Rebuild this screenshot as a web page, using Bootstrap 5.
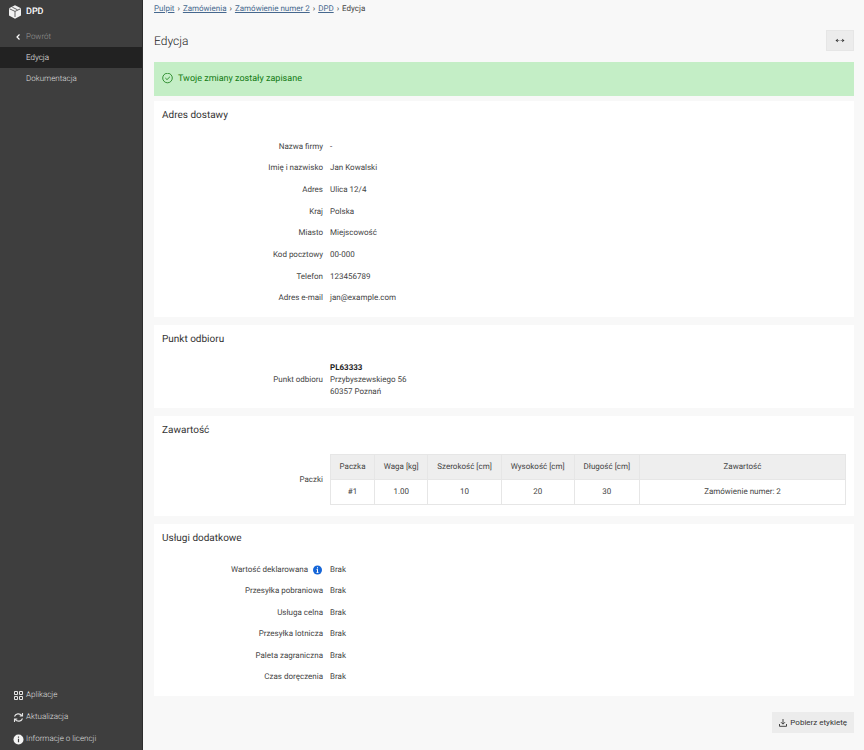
<!DOCTYPE html>
<html lang="pl">
<head>
<meta charset="utf-8">
<meta name="viewport" content="width=device-width, initial-scale=1">
<title>DPD – Edycja</title>
<link href="https://cdn.jsdelivr.net/npm/bootstrap@5.3.0/dist/css/bootstrap.min.css" rel="stylesheet">
<style>
body { font-family: Roboto, "Liberation Sans", sans-serif; font-size: 8px; line-height: 12px; color: #444; background: #f8f8f8; text-rendering: geometricPrecision; }
.side { flex: 0 0 143px; background: #3e3e3e; border-right: 1px solid #2c2c2c; }
.side a { color: #dedede; height: 21px; font-weight: 300; }
.side .brand { height: 23px; padding-left: 8px; gap: 4px; font-size: 9px; font-weight: 500; color: #fff; margin-bottom: 3px; }
.side .nav-item-link { padding-left: 26px; }
.side .back { padding-left: 15px; gap: 5px; color: #959595; }
.side .current { background: #222; color: #eee; }
.side .tool { height: 22px; padding-left: 13px; gap: 2px; }
.main-area { padding: 3px 10px 16px 11px; }
.crumbs { font-size: 8px; --bs-breadcrumb-divider: "›"; --bs-breadcrumb-item-padding-x: 3px; --bs-breadcrumb-divider-color: #444; }
.crumbs a { color: #46688e; }
.crumbs .active { color: #444; }
.title-row { margin: 15px 0 11px; }
.title-row h1 { font-size: 12px; line-height: 16px; font-weight: 300; color: #222; }
.grey-btn { --bs-btn-bg: #ececec; --bs-btn-hover-bg: #e2e2e2; --bs-btn-border-color: #e6e6e6; --bs-btn-color: #333; --bs-btn-hover-color: #333; --bs-btn-font-size: 8px; --bs-btn-border-radius: 0; --bs-btn-padding-x: 5px; --bs-btn-padding-y: 0; line-height: 19px; }
.label-btn { --bs-btn-padding-x: 6px; --bs-btn-border-color: #ececec; gap: 3px; }
.expand-btn { width: 28px; height: 21px; }
.saved { padding: 11px 8px; gap: 4px; background: #c4eec6; color: #127a12; font-size: 9px; font-weight: 400; margin-bottom: 5px; }
.panel { background: #fff; padding: 8px; margin-bottom: 8px; }
.panel h2 { font-size: 10px; line-height: 14px; font-weight: 400; color: #333; margin-bottom: 13px; }
.panel-address { min-height: 216px; }
.panel-point { min-height: 83px; }
.panel-content { min-height: 100px; }
.panel-extra { min-height: 172px; }
.field { gap: 7px; }
.field-name { flex: 0 0 161px; text-align: right; }
.field strong { color: #222; }
.parcels { --bs-table-border-color: #e6e6e6; --bs-table-color: #444; font-size: 8px; }
.parcels th, .parcels td { padding: 6px 8px; text-align: center; white-space: nowrap; line-height: 12px; font-weight: 400; }
.parcels th { background: #eee; }
.parcels .fill { width: 40%; }
</style>
<script src="https://cdn.jsdelivr.net/npm/bootstrap@5.3.0/dist/js/bootstrap.bundle.min.js"></script>
</head>
<body>
<div class="d-flex min-vh-100">
  <nav class="side d-flex flex-column" aria-label="Menu">
    <a href="#" class="brand d-flex align-items-center text-decoration-none">
      <svg width="14" height="14" viewBox="0 0 14 14" aria-hidden="true"><path d="M7 0.300 13 3.300v7.200L7 13.700 1 10.500V3.300z" fill="#f2f2f2"/><path d="M1.500 3.800 7 6.400l5.500-2.600M7 6.400v5.600M4.300 2.200 9.500 4.800" fill="none" stroke="#3e3e3e" stroke-width=".8"/></svg>
      DPD
    </a>
    <a href="#" class="back d-flex align-items-center text-decoration-none">
      <svg width="6" height="8" viewBox="0 0 6 8" aria-hidden="true"><path d="M4.500 1.500 2 4l2.500 2.500" fill="none" stroke="#fff" stroke-width="1.200"/></svg>
      Powrót
    </a>
    <a href="#" class="nav-item-link current d-flex align-items-center text-decoration-none" aria-current="page">Edycja</a>
    <a href="#" class="nav-item-link d-flex align-items-center text-decoration-none">Dokumentacja</a>
    <div class="mt-auto">
      <a href="#" class="tool d-flex align-items-center text-decoration-none">
        <svg width="11" height="11" viewBox="0 0 11 11" aria-hidden="true" fill="none" stroke="#e4e4e4"><path d="M1.500 1.500h3v3h-3zM6.500 1.500h3v3h-3zM1.500 6.500h3v3h-3zM6.500 6.500h3v3h-3z"/></svg>
        Aplikacje
      </a>
      <a href="#" class="tool d-flex align-items-center text-decoration-none">
        <svg width="11" height="11" viewBox="0 0 11 11" aria-hidden="true" fill="none" stroke="#e4e4e4" stroke-width="1.100"><path d="M1.500 4.500C2.500 1.500 6.500.8 9 3.600M9.500 1v3H6.700M9.500 6.500C8.500 9.500 4.500 10.200 2 7.400M1.500 10V7h2.800"/></svg>
        Aktualizacja
      </a>
      <a href="#" class="tool d-flex align-items-center text-decoration-none">
        <svg width="11" height="11" viewBox="0 0 11 11" aria-hidden="true"><circle cx="5.500" cy="5.500" r="5" fill="#f4f4f4"/><path d="M5.500 2.500v1.300M5.500 4.700v3.600" stroke="#3e3e3e" stroke-width="1.200"/></svg>
        Informacje o licencji
      </a>
    </div>
  </nav>

  <main class="main-area flex-grow-1">
    <nav aria-label="Ścieżka">
      <ol class="breadcrumb crumbs mb-0">
        <li class="breadcrumb-item"><a href="#">Pulpit</a></li>
        <li class="breadcrumb-item"><a href="#">Zamówienia</a></li>
        <li class="breadcrumb-item"><a href="#">Zamówienie numer 2</a></li>
        <li class="breadcrumb-item"><a href="#">DPD</a></li>
        <li class="breadcrumb-item active" aria-current="page">Edycja</li>
      </ol>
    </nav>

    <div class="title-row d-flex align-items-center justify-content-between">
      <h1 class="m-0">Edycja</h1>
      <button type="button" class="btn grey-btn expand-btn d-flex align-items-center justify-content-center" aria-label="Rozszerz">
        <svg width="10" height="5" viewBox="0 0 10 5" aria-hidden="true"><path d="M.5 2.500 2.800.8v3.400zM9.500 2.500 7.200.8v3.400z" fill="#333"/><path d="M2.500 2.500h1.900M5.600 2.500h1.900" stroke="#888"/></svg>
      </button>
    </div>

    <div class="saved d-flex align-items-center" role="status">
      <svg width="12" height="12" viewBox="0 0 12 12" aria-hidden="true" fill="none" stroke="#127a12" stroke-width=".8"><circle cx="5.500" cy="5" r="4.800"/><path d="M3.300 5 5 6.600 7.900 3.800"/></svg>
      Twoje zmiany zostały zapisane
    </div>

    <section class="panel panel-address d-flex flex-column">
      <h2>Adres dostawy</h2>
      <dl class="d-flex flex-column flex-fill m-0">
        <div class="field d-flex flex-fill align-items-center"><dt class="field-name fw-normal">Nazwa firmy</dt><dd class="m-0">-</dd></div>
        <div class="field d-flex flex-fill align-items-center"><dt class="field-name fw-normal">Imię i nazwisko</dt><dd class="m-0">Jan Kowalski</dd></div>
        <div class="field d-flex flex-fill align-items-center"><dt class="field-name fw-normal">Adres</dt><dd class="m-0">Ulica 12/4</dd></div>
        <div class="field d-flex flex-fill align-items-center"><dt class="field-name fw-normal">Kraj</dt><dd class="m-0">Polska</dd></div>
        <div class="field d-flex flex-fill align-items-center"><dt class="field-name fw-normal">Miasto</dt><dd class="m-0">Miejscowość</dd></div>
        <div class="field d-flex flex-fill align-items-center"><dt class="field-name fw-normal">Kod pocztowy</dt><dd class="m-0">00-000</dd></div>
        <div class="field d-flex flex-fill align-items-center"><dt class="field-name fw-normal">Telefon</dt><dd class="m-0">123456789</dd></div>
        <div class="field d-flex flex-fill align-items-center"><dt class="field-name fw-normal">Adres e-mail</dt><dd class="m-0">jan@example.com</dd></div>
      </dl>
    </section>

    <section class="panel panel-point d-flex flex-column">
      <h2>Punkt odbioru</h2>
      <dl class="d-flex flex-column flex-fill m-0">
        <div class="field d-flex flex-fill align-items-center"><dt class="field-name fw-normal">Punkt odbioru</dt><dd class="m-0"><strong>PL63333</strong><br>Przybyszewskiego 56<br>60357 Poznań</dd></div>
      </dl>
    </section>

    <section class="panel panel-content d-flex flex-column">
      <h2>Zawartość</h2>
      <div class="field d-flex flex-fill align-items-center">
        <span class="field-name" id="parcels-name">Paczki</span>
        <table class="table table-bordered parcels mb-0" aria-labelledby="parcels-name">
          <thead><tr><th scope="col">Paczka</th><th scope="col">Waga [kg]</th><th scope="col">Szerokość [cm]</th><th scope="col">Wysokość [cm]</th><th scope="col">Długość [cm]</th><th scope="col" class="fill">Zawartość</th></tr></thead>
          <tbody><tr><td>#1</td><td>1.00</td><td>10</td><td>20</td><td>30</td><td>Zamówienie numer: 2</td></tr></tbody>
        </table>
      </div>
    </section>

    <section class="panel panel-extra d-flex flex-column">
      <h2>Usługi dodatkowe</h2>
      <dl class="d-flex flex-column flex-fill m-0">
        <div class="field d-flex flex-fill align-items-center"><dt class="field-name fw-normal d-flex align-items-center justify-content-end gap-1">Wartość deklarowana
          <svg width="11" height="10" viewBox="0 0 11 10" role="img" aria-label="Informacja"><circle cx="5.500" cy="5" r="4.500" fill="#1666d8"/><path d="M5.500 2.200v1.200M5.500 4.200v3.400M4.600 4.500h.9M4.500 7.400h2" stroke="#fff" stroke-width="1"/></svg></dt><dd class="m-0">Brak</dd></div>
        <div class="field d-flex flex-fill align-items-center"><dt class="field-name fw-normal">Przesyłka pobraniowa</dt><dd class="m-0">Brak</dd></div>
        <div class="field d-flex flex-fill align-items-center"><dt class="field-name fw-normal">Usługa celna</dt><dd class="m-0">Brak</dd></div>
        <div class="field d-flex flex-fill align-items-center"><dt class="field-name fw-normal">Przesyłka lotnicza</dt><dd class="m-0">Brak</dd></div>
        <div class="field d-flex flex-fill align-items-center"><dt class="field-name fw-normal">Paleta zagraniczna</dt><dd class="m-0">Brak</dd></div>
        <div class="field d-flex flex-fill align-items-center"><dt class="field-name fw-normal">Czas doręczenia</dt><dd class="m-0">Brak</dd></div>
      </dl>
    </section>

    <div class="d-flex justify-content-end pt-2">
      <button type="button" class="btn grey-btn label-btn d-flex align-items-center">
        <svg width="8" height="8" viewBox="0 0 8 8" aria-hidden="true" fill="none" stroke="#333"><path d="M4 0v5M2 3.200l2 2 2-2M.5 5v2.300h7V5" stroke-width=".9"/></svg>
        Pobierz etykietę
      </button>
    </div>
  </main>
</div>
</body>
</html>
